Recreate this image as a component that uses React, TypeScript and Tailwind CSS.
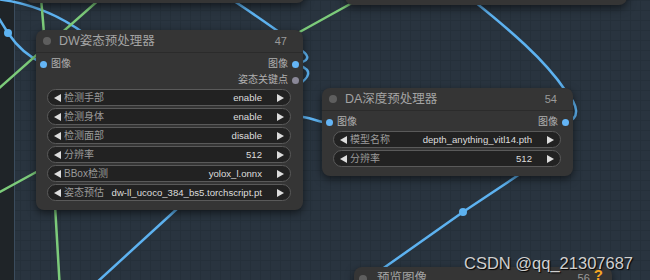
import React from "react"

type Slot = { label: string; color: string }
type Widget = { label: string; value: string }

interface NodeProps {
  className: string
  title: string
  id: string
  inputs: Slot[]
  outputs: Slot[]
  widgets: Widget[]
}

function Arrow({ dir }: { dir: "left" | "right" }) {
  return (
    <svg width="7" height="8" viewBox="0 0 7 8" className="shrink-0">
      {dir === "left" ? (
        <polygon points="7,0 7,8 0,4" fill="#dddddd" />
      ) : (
        <polygon points="0,0 0,8 7,4" fill="#dddddd" />
      )}
    </svg>
  )
}

function ComboWidget({ label, value }: Widget) {
  return (
    <div className="flex h-[17px] items-center rounded-full border border-[#5a5a5a] bg-[#222222] px-[6px]">
      <Arrow dir="left" />
      <span className="ml-[3px] text-[10px] leading-none text-[#9a9a9a]">{label}</span>
      <span className="ml-auto whitespace-nowrap text-[9.6px] leading-none text-[#dddddd]">{value}</span>
      <span className="ml-[15px] flex">
        <Arrow dir="right" />
      </span>
    </div>
  )
}

function Node({ className, title, id, inputs, outputs, widgets }: NodeProps) {
  const rows = Math.max(inputs.length, outputs.length)
  return (
    <div className={`absolute rounded-lg bg-[#353535] shadow-[0_3px_8px_rgba(0,0,0,0.55)] ${className}`}>
      {/* Title bar */}
      <div className="flex h-[23px] items-center border-b border-[#2b2b2b] pl-[7px] pr-[16px]">
        <span className="h-[8px] w-[8px] rounded-full bg-[#5e5e5e]" />
        <span className="ml-[8px] text-[12.5px] leading-none text-[#a3a3a3]">{title}</span>
        <span className="ml-auto text-[11px] leading-none text-[#9a9a9a]">{id}</span>
      </div>

      {/* Slots */}
      <div className="pt-[3px]">
        {Array.from({ length: rows }).map((_, i) => (
          <div key={i} className="flex h-4 items-center">
            {inputs[i] && (
              <>
                <span className="ml-[4px] h-[7px] w-[7px] rounded-full" style={{ background: inputs[i].color }} />
                <span className="ml-[4px] text-[10px] leading-none text-[#b0b0b0]">{inputs[i].label}</span>
              </>
            )}
            {outputs[i] && (
              <>
                <span className="ml-auto text-[10px] leading-none text-[#b0b0b0]">{outputs[i].label}</span>
                <span className="ml-[4px] mr-[4px] h-[7px] w-[7px] rounded-full" style={{ background: outputs[i].color }} />
              </>
            )}
          </div>
        ))}
      </div>

      {/* Widgets */}
      <div className="mt-px flex flex-col gap-[2px] pb-[9px] pl-[11px] pr-[12px]">
        {widgets.map((w) => (
          <ComboWidget key={w.label} label={w.label} value={w.value} />
        ))}
      </div>
    </div>
  )
}

const BLUE = "#5db2f0"
const GREEN = "#7ccb7a"

function Wires() {
  return (
    <svg className="absolute inset-0" width="650" height="280" viewBox="0 0 650 280" fill="none">
      <g stroke={BLUE} strokeWidth="2.5" strokeLinecap="round">
        <path d="M -5 -1 C 25 2, 55 12, 85 34" />
        <path d="M -2 17 L 8 33 C 14 42, 24 55, 44 64" />
        <path d="M 228 -3 C 245 8, 262 20, 285 36" />
        <path d="M 295 64 Q 316 60 301 50" />
        <path d="M 295 64 Q 318 70 301 83" />
        <path d="M 296 116 C 312 117, 318 123, 332 123" />
        <path d="M 470 -2 C 510 30, 545 60, 565 90 C 578 105, 581 118, 566 123" />
        <path d="M 520 174 L 463 212 L 378 272" />
        <path d="M 178 208 L 95 284" />
      </g>
      <g stroke={GREEN} strokeWidth="2.5" strokeLinecap="round">
        <path d="M 41 -2 C 42 10, 43 20, 44 34" />
        <path d="M -3 90 L 101 -2" />
        <path d="M 296 34 L 352 3" />
        <path d="M -2 193 L 40 170" />
        <path d="M 55 205 L 59.5 282" />
      </g>
      <circle cx="8" cy="33" r="4" fill={BLUE} />
      <circle cx="463" cy="212" r="4" fill={BLUE} />
    </svg>
  )
}

export default function App() {
  const image: Slot = { label: "图像", color: "#64b5f6" }
  return (
    <div className="relative h-[280px] w-[650px] overflow-hidden bg-[#29343f] bg-[linear-gradient(to_right,#25303a_1px,transparent_1px),linear-gradient(to_bottom,#25303a_1px,transparent_1px)] bg-[size:10px_10px] font-['Liberation_Sans','Noto_Sans_CJK_SC',sans-serif]">
      {/* Left dark group strip */}
      <div className="absolute left-0 top-0 h-full w-[15px] border-r border-[#3b4c5d] bg-[#1f2428]" />

      <Wires />

      {/* Nodes cut by the top edge */}
      <div className="absolute left-[25px] top-[-20px] h-[23px] w-[280px] rounded-lg bg-[#353535] shadow-[0_3px_8px_rgba(0,0,0,0.55)]" />
      <div className="absolute left-[345px] top-[-20px] h-[25px] w-[282px] rounded-lg bg-[#353535] shadow-[0_3px_8px_rgba(0,0,0,0.55)]" />

      <Node
        className="left-[36px] top-[30px] w-[267px]"
        title="DW姿态预处理器"
        id="47"
        inputs={[image]}
        outputs={[image, { label: "姿态关键点", color: "#8a8898" }]}
        widgets={[
          { label: "检测手部", value: "enable" },
          { label: "检测身体", value: "enable" },
          { label: "检测面部", value: "disable" },
          { label: "分辨率", value: "512" },
          { label: "BBox检测", value: "yolox_l.onnx" },
          { label: "姿态预估", value: "dw-ll_ucoco_384_bs5.torchscript.pt" },
        ]}
      />

      <Node
        className="left-[322px] top-[88px] w-[251px]"
        title="DA深度预处理器"
        id="54"
        inputs={[image]}
        outputs={[image]}
        widgets={[
          { label: "模型名称", value: "depth_anything_vitl14.pth" },
          { label: "分辨率", value: "512" },
        ]}
      />

      {/* Preview node, mostly below the fold */}
      <div className="absolute left-[354px] top-[267px] h-[40px] w-[258px] rounded-lg bg-[#353535] shadow-[0_3px_8px_rgba(0,0,0,0.55)]">
        <div className="flex h-[23px] items-center pl-[5px] pr-[9px]">
          <span className="h-[8px] w-[8px] rounded-full bg-[#5e5e5e]" />
          <span className="ml-[10px] text-[12.5px] leading-none text-[#a3a3a3]">预览图像</span>
          <span className="ml-auto text-[11px] leading-none text-[#9a9a9a]">56</span>
          <span className="-mt-[8px] ml-[4px] text-[15px] font-bold leading-none text-[#f5a623]">?</span>
        </div>
      </div>

      {/* Watermark */}
      <div className="absolute left-[464px] top-[251px] text-[16.5px] text-[#cfcfcf] [text-shadow:1px_1px_1px_#000]">
        CSDN @qq_21307687
      </div>
    </div>
  )
}
